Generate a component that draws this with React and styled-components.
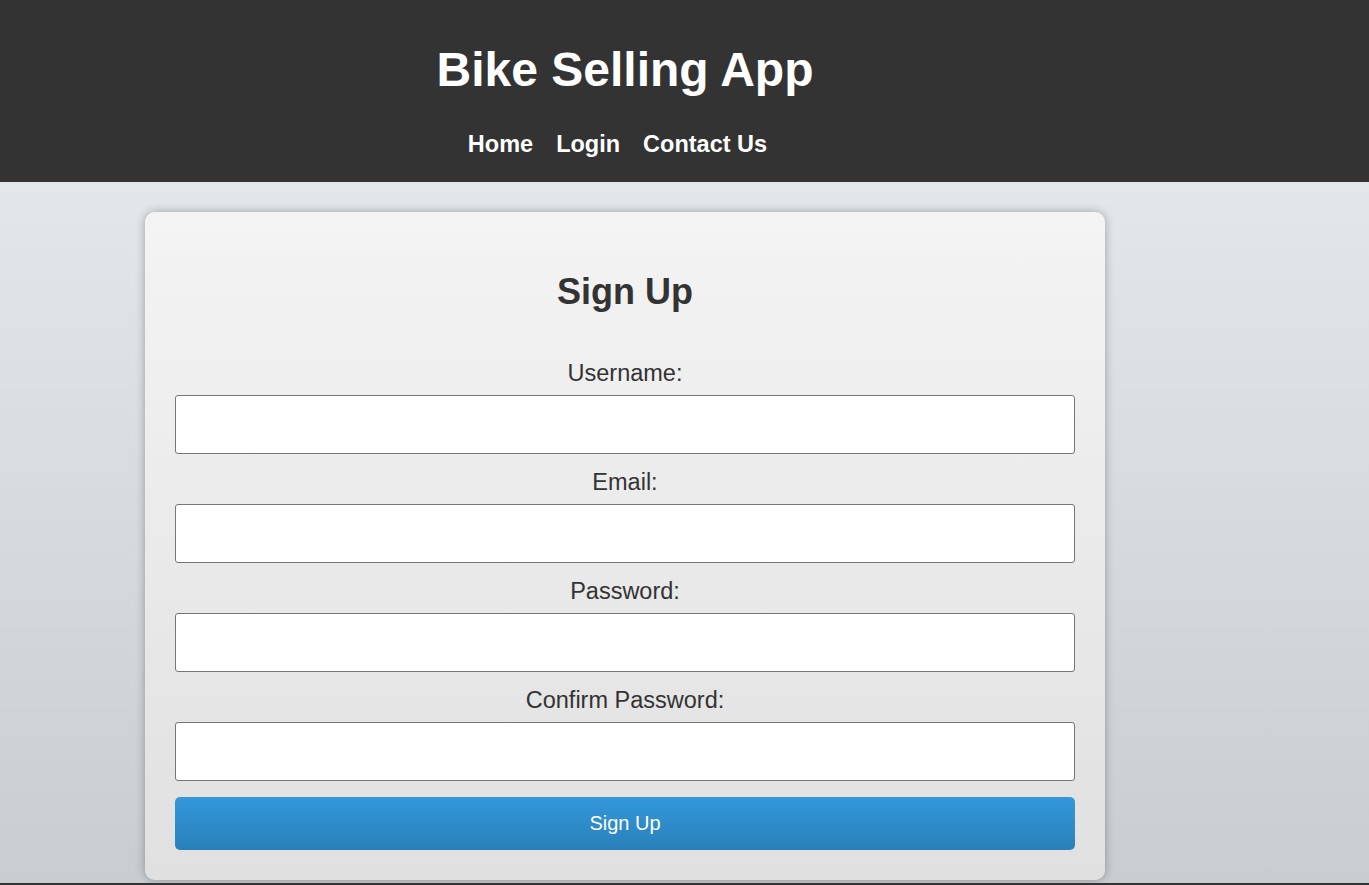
import styled, { createGlobalStyle } from "styled-components";

const GlobalStyle = createGlobalStyle`
  html, body {
    margin: 0;
    padding: 0;
  }
  body {
    font-family: "Liberation Sans", Arial, sans-serif;
    color: #333;
    background: #333;
  }
  * {
    box-sizing: border-box;
  }
`;

const fields = [
  { id: "username", label: "Username:", type: "text" },
  { id: "email", label: "Email:", type: "email" },
  { id: "password", label: "Password:", type: "password" },
  { id: "confirm", label: "Confirm Password:", type: "password" },
];

const App = () => {
  return (
    <>
      <GlobalStyle />
      <StyledHeader>
        <StyledColumn>
          <StyledTitle>Bike Selling App</StyledTitle>
          <StyledNav>
            <StyledNavLink href="#">Home</StyledNavLink>
            <StyledNavLink href="#">Login</StyledNavLink>
            <StyledNavLink href="#">Contact Us</StyledNavLink>
          </StyledNav>
        </StyledColumn>
      </StyledHeader>
      <StyledMain>
        <StyledColumn>
          <StyledCard onSubmit={(e) => e.preventDefault()}>
            <StyledHeading>Sign Up</StyledHeading>
            {fields.map((field) => (
              <StyledField key={field.id}>
                <StyledLabel htmlFor={field.id}>{field.label}</StyledLabel>
                <StyledInput id={field.id} type={field.type} />
              </StyledField>
            ))}
            <StyledButton type="submit">Sign Up</StyledButton>
          </StyledCard>
        </StyledColumn>
      </StyledMain>
      <StyledFooter />
    </>
  );
};

export default App;

//#region Styled Objects
const StyledColumn = styled.div`
  width: 1250px;
  text-align: center;
`;

const StyledHeader = styled.header`
  background: #333;
  color: #fff;
  height: 182px;
  padding-top: 42px;
`;

const StyledTitle = styled.h1`
  margin: 0;
  font-size: 48px;
  line-height: 56px;
  font-weight: bold;
`;

const StyledNav = styled.nav`
  margin-top: 32px;
  padding-right: 15px;
  display: flex;
  justify-content: center;
  gap: 23px;
`;

const StyledNavLink = styled.a`
  color: #fff;
  text-decoration: none;
  font-weight: bold;
  font-size: 23.5px;
  line-height: 28px;
`;

const StyledMain = styled.main`
  background: linear-gradient(to bottom, #e3e7e9, #c8cdd1);
  padding: 30px 0 3px;
`;

const StyledCard = styled.form`
  width: 960px;
  margin: 0 auto;
  padding: 30px;
  border-radius: 10px;
  background: linear-gradient(to bottom, #f4f4f4, #e0e0e0);
  box-shadow: 0 0 10px rgba(0, 0, 0, 0.3);
`;

const StyledHeading = styled.h2`
  margin: 29px 0 47px;
  font-size: 36px;
  line-height: 42px;
  color: #333;
`;

const StyledField = styled.div`
  display: flex;
  flex-direction: column;
  margin-bottom: 15px;
`;

const StyledLabel = styled.label`
  font-size: 23.5px;
  line-height: 26px;
  margin-bottom: 9px;
  color: #333;
`;

const StyledInput = styled.input`
  height: 59px;
  width: 100%;
  border: 1px solid #767676;
  border-radius: 3px;
  background: #fff;
  font-size: 20px;
  padding: 0 10px;
`;

const StyledButton = styled.button`
  display: block;
  width: 100%;
  height: 53px;
  margin-top: 16px;
  border: none;
  border-radius: 5px;
  background: linear-gradient(to bottom, #3498db, #2980b9);
  color: #fff;
  font-family: inherit;
  font-size: 20px;
  cursor: pointer;
`;

const StyledFooter = styled.footer`
  background: #333;
  height: 60px;
`;
//#endregion
